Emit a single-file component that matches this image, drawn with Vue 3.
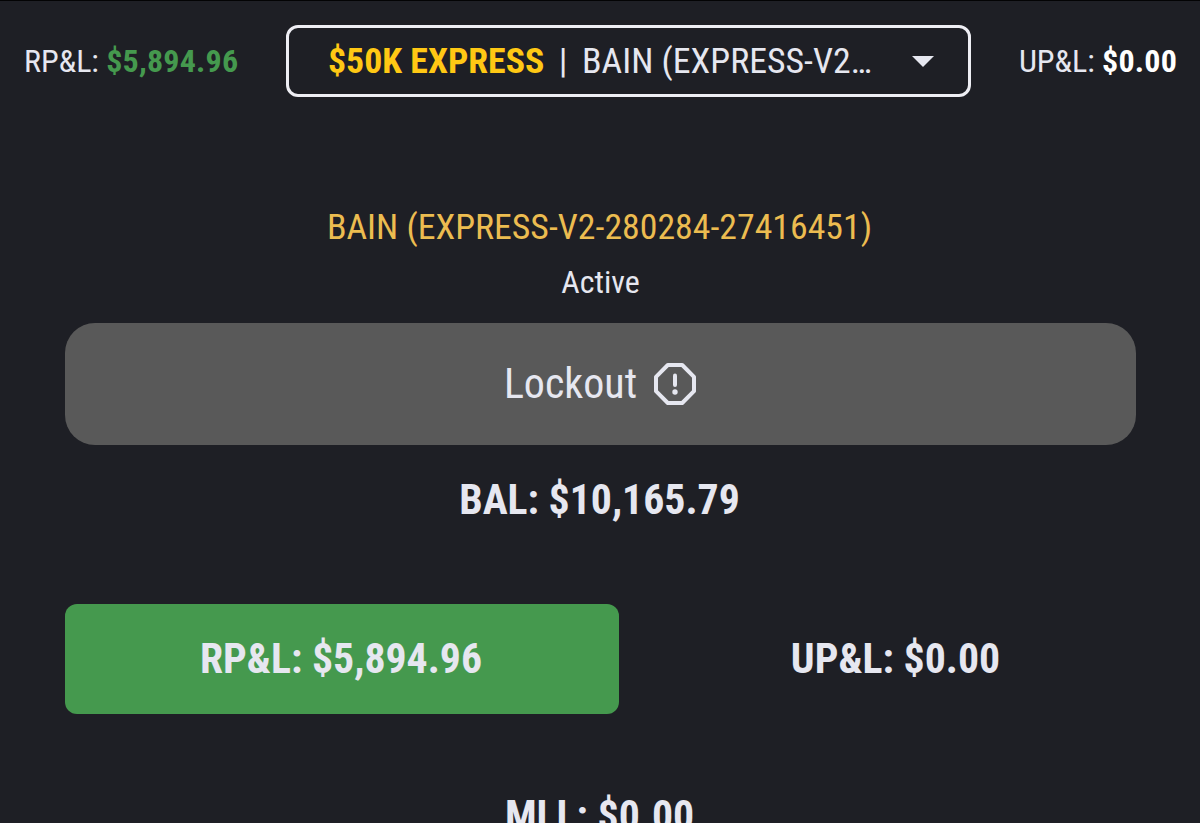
<template>
  <div class="page">
    <header class="top-bar">
      <div class="pnl realized">RP&amp;L: <b class="green">{{ account.rpl }}</b></div>
      <div class="account-select" @click="open = !open">
        <div class="select-text">
          <b class="plan">{{ account.plan }}</b><span class="divider">|</span>{{ account.name }}
        </div>
        <svg class="arrow" :class="{ open }" viewBox="0 0 22 11">
          <path d="M0 0h22L11 11z" fill="currentColor" />
        </svg>
      </div>
      <div class="pnl unrealized">UP&amp;L: <b class="white">{{ account.upl }}</b></div>
    </header>

    <main class="content">
      <div class="account-name">{{ account.name }}</div>
      <div class="status">{{ account.status }}</div>
      <button class="lockout">
        <span>Lockout</span>
        <svg class="lockout-icon" viewBox="0 0 44 44" fill="none" stroke="currentColor">
          <path
            d="M14.8 3h14.4L41 14.8v14.4L29.2 41H14.8L3 29.2V14.8z"
            stroke-width="4"
            stroke-linejoin="round"
          />
          <path d="M22 13.6v9.4" stroke-width="4" stroke-linecap="round" />
          <circle cx="22" cy="30" r="2.7" fill="currentColor" stroke="none" />
        </svg>
      </button>
      <div class="balance">BAL: {{ account.balance }}</div>
      <div class="pnl-row">
        <div class="box profit">RP&amp;L: {{ account.rpl }}</div>
        <div class="box">UP&amp;L: {{ account.upl }}</div>
      </div>
      <div class="mll">MLL: {{ account.mll }}</div>
    </main>
  </div>
</template>

<script setup>
import { ref } from 'vue';

const open = ref(false);

const account = ref({
  plan: '$50K EXPRESS',
  name: 'BAIN (EXPRESS-V2-280284-27416451)',
  status: 'Active',
  balance: '$10,165.79',
  rpl: '$5,894.96',
  upl: '$0.00',
  mll: '$0.00'
});
</script>

<style>
body {
  margin: 0;
  background: #1e1f25;
}
</style>

<style scoped>
.page {
  box-sizing: border-box;
  height: 823px;
  overflow: hidden;
  border-top: 1px solid #030304;
  background: #1e1f25;
  color: #e6e7f0;
  font-family: "Roboto Condensed", Roboto, sans-serif;
}

.top-bar {
  display: flex;
  align-items: center;
  padding: 24px 23px 0 24px;
}

.pnl {
  font-size: 32px;
  line-height: 40px;
  white-space: nowrap;
}

.pnl b {
  letter-spacing: 0.2px;
}

.realized {
  width: 262px;
}

.unrealized {
  margin-left: auto;
}

.green {
  color: #45994e;
}

.white {
  color: #fff;
}

.account-select {
  box-sizing: border-box;
  display: flex;
  flex: none;
  align-items: center;
  width: 685px;
  height: 72px;
  padding: 0 34px 0 39px;
  border: 3px solid #eeeef4;
  border-radius: 12px;
  cursor: pointer;
}

.select-text {
  width: 548px;
  overflow: hidden;
  text-overflow: ellipsis;
  white-space: nowrap;
  font-size: 35.8px;
  line-height: 46px;
}

.plan {
  color: #ffc814;
}

.divider {
  margin: 0 14.5px;
}

.arrow {
  width: 22px;
  height: 11px;
  margin-left: auto;
}

.arrow.open {
  transform: rotate(180deg);
}

.content {
  display: flex;
  flex-direction: column;
  align-items: center;
  padding: 107px 64px 0 65px;
}

.account-name {
  padding-right: 2px;
  color: #ecbc50;
  font-size: 35.8px;
  line-height: 46px;
}

.status {
  margin-top: 12px;
  font-size: 32px;
  line-height: 40px;
}

.lockout {
  display: flex;
  align-items: center;
  justify-content: center;
  gap: 16px;
  width: 100%;
  height: 122px;
  margin-top: 21px;
  padding: 0 0 1px;
  border: none;
  border-radius: 30px;
  background: #595959;
  color: inherit;
  font-family: inherit;
  font-size: 42px;
  cursor: pointer;
}

.lockout-icon {
  width: 44px;
  height: 44px;
}

.balance,
.box,
.mll {
  font-size: 41.75px;
  font-weight: 700;
  line-height: 50px;
}

.balance {
  margin-top: 30px;
  padding-right: 2px;
}

.pnl-row {
  display: flex;
  gap: 36px;
  width: 100%;
  margin-top: 79px;
}

.box {
  flex: 1;
  padding: 30px 0;
  border-radius: 12px;
  text-align: center;
}

.profit {
  box-sizing: border-box;
  flex: none;
  width: 554px;
  padding-right: 2px;
  background: #45994e;
}

.mll {
  margin-top: 77px;
  padding-right: 2px;
}
</style>
